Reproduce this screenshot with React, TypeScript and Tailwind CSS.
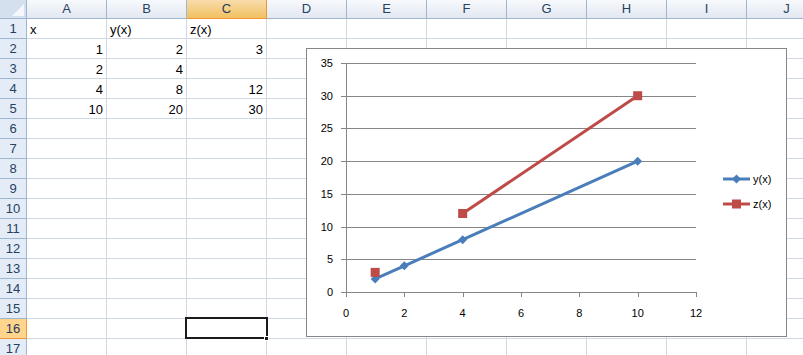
import React from "react";

const COLS = ["A", "B", "C", "D", "E", "F", "G", "H", "I", "J"];
const ROWS = Array.from({ length: 17 }, (_, i) => i + 1);

const CELLS: Record<string, { v: string; num?: boolean }> = {
  A1: { v: "x" },
  B1: { v: "y(x)" },
  C1: { v: "z(x)" },
  A2: { v: "1", num: true },
  B2: { v: "2", num: true },
  C2: { v: "3", num: true },
  A3: { v: "2", num: true },
  B3: { v: "4", num: true },
  A4: { v: "4", num: true },
  B4: { v: "8", num: true },
  C4: { v: "12", num: true },
  A5: { v: "10", num: true },
  B5: { v: "20", num: true },
  C5: { v: "30", num: true },
};

// plot geometry, relative to the chart box
const X0 = 40;
const X_PER = 350 / 12;
const Y0 = 244;
const Y_PER = 229 / 35;
const px = (x: number) => X0 + x * X_PER;
const py = (y: number) => Y0 - y * Y_PER;

const BLUE = "#4a7ebb";
const RED = "#be4b48";
const FONT = "'Liberation Sans', Arial, sans-serif";

const ySeries: [number, number][] = [
  [1, 2],
  [2, 4],
  [4, 8],
  [10, 20],
];
const zSeries: [number, number][] = [
  [4, 12],
  [10, 30],
];

function Diamond({ cx, cy }: { cx: number; cy: number }) {
  return (
    <polygon
      points={`${cx},${cy - 4.5} ${cx + 4.5},${cy} ${cx},${cy + 4.5} ${cx - 4.5},${cy}`}
      fill={BLUE}
    />
  );
}

function Square({ cx, cy }: { cx: number; cy: number }) {
  return <rect x={cx - 4.5} y={cy - 4.5} width={9} height={9} fill={RED} />;
}

function Chart() {
  const yTicks = [0, 5, 10, 15, 20, 25, 30, 35];
  const xTicks = [0, 2, 4, 6, 8, 10, 12];
  return (
    <div className="absolute left-[306px] top-[48px] h-[289px] w-[481px] border border-[#868686] bg-white">
      <svg width={479} height={287} className="absolute -left-px -top-px overflow-visible">
        {yTicks.map((t) => (
          <g key={t}>
            <line
              x1={X0 - 5}
              x2={t === 0 ? X0 : 390}
              y1={Math.round(py(t)) + 0.5}
              y2={Math.round(py(t)) + 0.5}
              stroke="#868686"
              shapeRendering="crispEdges"
            />
            <text x={27} y={Math.round(py(t)) + 4} textAnchor="end" fontSize={11} fill="#000" fontFamily={FONT}>
              {t}
            </text>
          </g>
        ))}
        <line x1={X0 + 0.5} x2={X0 + 0.5} y1={py(35)} y2={Y0 + 0.5} stroke="#868686" shapeRendering="crispEdges" />
        <line x1={X0} x2={390} y1={Y0 + 0.5} y2={Y0 + 0.5} stroke="#868686" shapeRendering="crispEdges" />
        {xTicks.map((t) => (
          <g key={t}>
            <line
              x1={Math.round(px(t)) + 0.5}
              x2={Math.round(px(t)) + 0.5}
              y1={Y0}
              y2={Y0 + 5}
              stroke="#868686"
              shapeRendering="crispEdges"
            />
            <text x={px(t)} y={269} textAnchor="middle" fontSize={11} fill="#000" fontFamily={FONT}>
              {t}
            </text>
          </g>
        ))}

        <polyline
          points={ySeries.map(([x, y]) => `${px(x)},${py(y)}`).join(" ")}
          fill="none"
          stroke={BLUE}
          strokeWidth={3}
          strokeLinejoin="round"
        />
        {ySeries.map(([x, y]) => (
          <Diamond key={x} cx={px(x)} cy={py(y)} />
        ))}
        <polyline
          points={zSeries.map(([x, y]) => `${px(x)},${py(y)}`).join(" ")}
          fill="none"
          stroke={RED}
          strokeWidth={3}
        />
        <Square cx={px(1)} cy={py(3)} />
        {zSeries.map(([x, y]) => (
          <Square key={x} cx={px(x)} cy={py(y)} />
        ))}

        {/* legend */}
        <line x1={417} x2={444} y1={131} y2={131} stroke={BLUE} strokeWidth={3} />
        <Diamond cx={430.5} cy={131} />
        <text x={447} y={135} fontSize={11} fill="#000" fontFamily={FONT}>
          y(x)
        </text>
        <line x1={417} x2={444} y1={156} y2={156} stroke={RED} strokeWidth={3} />
        <Square cx={430.5} cy={156} />
        <text x={447} y={160} fontSize={11} fill="#000" fontFamily={FONT}>
          z(x)
        </text>
      </svg>
    </div>
  );
}

export default function App() {
  return (
    <div className="relative h-[355px] w-[803px] overflow-hidden bg-white font-['Liberation_Sans',Arial,sans-serif] text-[13px]">
      <div className="grid grid-cols-[27px_repeat(10,80px)] grid-rows-[19px_repeat(17,20px)]">
        {/* select-all corner */}
        <div className="relative border-b border-r border-[#9eb6ce] bg-[#d5e0ee]">
          <svg width={12} height={12} className="absolute bottom-[2px] right-[2px]">
            <polygon points="12,0 12,12 0,12" fill="#f4f7fb" />
          </svg>
        </div>
        {COLS.map((c) => (
          <div
            key={c}
            className={
              c === "C"
                ? "flex items-center justify-center border-b border-r border-[#f29536] bg-gradient-to-b from-[#f9dcaa] to-[#f1c15f] text-[#1f3a5c]"
                : "flex items-center justify-center border-b border-r border-[#9eb6ce] bg-gradient-to-b from-[#f7f9fc] to-[#e2e8f1] text-[#27415f]"
            }
          >
            {c}
          </div>
        ))}
        {ROWS.map((r) => (
          <React.Fragment key={r}>
            <div
              className={
                r === 16
                  ? "flex items-center justify-center border-b border-r border-[#f29536] bg-[#ffd58d] text-[#1f3a5c]"
                  : "flex items-center justify-center border-b border-r border-[#9eb6ce] bg-[#e4ecf7] text-[#27415f]"
              }
            >
              {r}
            </div>
            {COLS.map((c) => {
              const cell = CELLS[`${c}${r}`];
              return (
                <div
                  key={c}
                  className={`flex items-end border-b border-r border-[#d0d7e5] px-[3px] pb-[2px] leading-none text-black ${
                    cell?.num ? "justify-end" : "justify-start"
                  }`}
                >
                  {cell?.v}
                </div>
              );
            })}
          </React.Fragment>
        ))}
      </div>

      {/* active cell C16 */}
      <div className="absolute left-[185px] top-[317px] h-[22px] w-[83px] border-2 border-[#1b1b1b]" />
      <div className="absolute left-[264px] top-[336px] h-[5px] w-[5px] border border-white bg-[#1b1b1b]" />

      <Chart />
    </div>
  );
}
